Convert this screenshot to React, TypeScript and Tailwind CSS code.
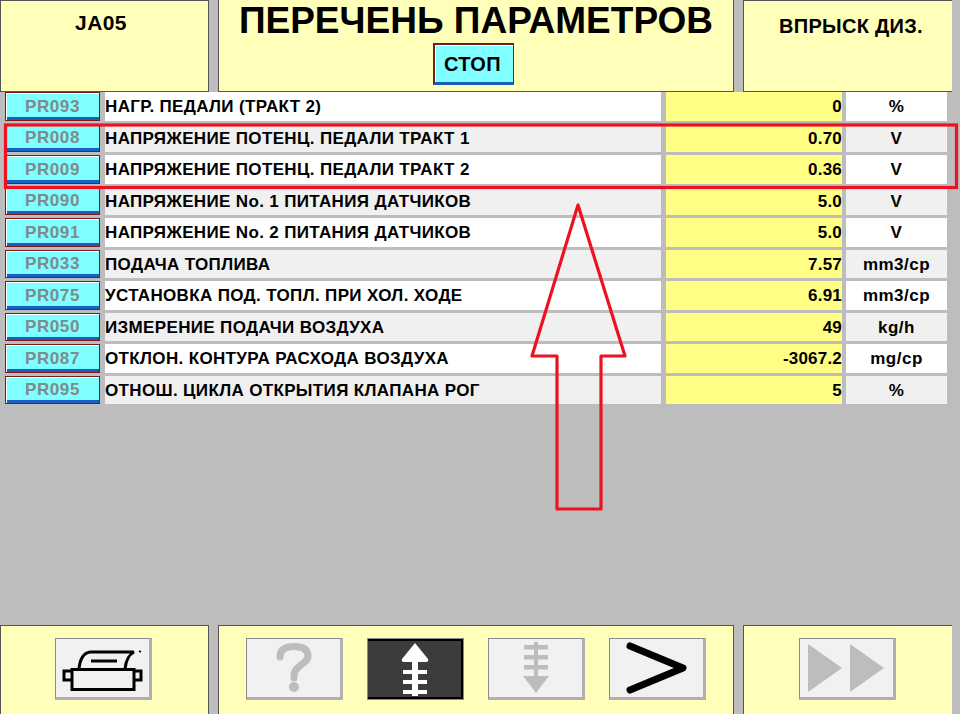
import type { ReactNode } from 'react'

const rows = [
  { code: 'PR093', label: 'НАГР. ПЕДАЛИ (ТРАКТ 2)', value: '0', unit: '%' },
  { code: 'PR008', label: 'НАПРЯЖЕНИЕ ПОТЕНЦ. ПЕДАЛИ ТРАКТ 1', value: '0.70', unit: 'V' },
  { code: 'PR009', label: 'НАПРЯЖЕНИЕ ПОТЕНЦ. ПЕДАЛИ ТРАКТ 2', value: '0.36', unit: 'V' },
  { code: 'PR090', label: 'НАПРЯЖЕНИЕ No. 1 ПИТАНИЯ ДАТЧИКОВ', value: '5.0', unit: 'V' },
  { code: 'PR091', label: 'НАПРЯЖЕНИЕ No. 2 ПИТАНИЯ ДАТЧИКОВ', value: '5.0', unit: 'V' },
  { code: 'PR033', label: 'ПОДАЧА ТОПЛИВА', value: '7.57', unit: 'mm3/cp' },
  { code: 'PR075', label: 'УСТАНОВКА ПОД. ТОПЛ. ПРИ ХОЛ. ХОДЕ', value: '6.91', unit: 'mm3/cp' },
  { code: 'PR050', label: 'ИЗМЕРЕНИЕ ПОДАЧИ ВОЗДУХА', value: '49', unit: 'kg/h' },
  { code: 'PR087', label: 'ОТКЛОН. КОНТУРА РАСХОДА ВОЗДУХА', value: '-3067.2', unit: 'mg/cp' },
  { code: 'PR095', label: 'ОТНОШ. ЦИКЛА ОТКРЫТИЯ КЛАПАНА РОГ', value: '5', unit: '%' },
]

function ToolButton({ children, dark }: { children: ReactNode; dark?: boolean }) {
  return (
    <button
      className={`flex h-[62px] w-[97px] items-center justify-center ${
        dark
          ? 'border-[3px] border-l border-black bg-[#3c3c3c] outline outline-[#8a8a8a] -outline-offset-1'
          : 'border border-r-[3px] border-b-[3px] border-t-[#8a8a8a] border-l-[#8a8a8a] border-r-[#b0b0b0] border-b-[#b0b0b0] bg-[#f1f1f1]'
      }`}
    >
      {children}
    </button>
  )
}

export default function App() {
  return (
    <div
      className="relative flex h-[714px] w-[960px] flex-col overflow-hidden bg-[#bdbdbd] text-black"
      style={{ fontFamily: '"Liberation Sans", Arial, sans-serif' }}
    >
      {/* Header */}
      <div className="flex h-[92px] gap-[9px] pr-[8px]">
        <div className="flex w-[209px] justify-center border border-[#555] bg-[#ffffb9] pt-[10px] pr-[7px] text-[21px] leading-[23px] font-bold tracking-[0.4px]">
          JA05
        </div>
        <div className="flex flex-1 flex-col items-center border-x border-b border-[#555] bg-[#ffffb9]">
          <h1 className="text-[37px] leading-[41px] font-bold whitespace-nowrap">ПЕРЕЧЕНЬ ПАРАМЕТРОВ</h1>
          <button className="mt-[2px] mr-[5px] h-[42px] w-[81px] border-2 border-r border-b-[3px] border-t-[#7a1a1a] border-l-[#7a1a1a] border-r-[#7a1a1a] border-b-[#1560c0] bg-[#7fffff] pr-[3px] text-[20px] font-bold tracking-[0.4px] shadow-[inset_0_1px_0_#ffffff,inset_1px_0_0_#ffffff]">
            СТОП
          </button>
        </div>
        <div className="flex w-[209px] justify-center border-y border-l border-[#555] bg-[#ffffb9] pt-[15px] pl-[6px] text-[20px] leading-[21px] font-bold tracking-[0.3px]">
          ВПРЫСК ДИЗ.
        </div>
      </div>

      {/* Parameter table */}
      <div className="flex flex-col gap-[3px] pr-[13px] pl-[5px]">
        {rows.map((r, i) => (
          <div key={r.code} className="flex h-[28.5px] gap-[5px]">
            <button className="w-[95px] border border-[#7a1a1a] bg-[#7fffff] text-[17px] font-bold tracking-[0.6px] text-[#7d8b8b] shadow-[inset_0_1px_0_#ffffff,inset_1px_0_0_#ffffff,inset_0_-3px_0_#1560c0]">
              {r.code}
            </button>
            <div className={`flex flex-1 items-center pt-[1px] text-[17px] font-bold tracking-[0.35px] whitespace-nowrap ${i % 2 ? 'bg-[#f0f0f0]' : 'bg-white'}`}>
              {r.label}
            </div>
            <div className="flex w-[176px] items-center justify-end bg-[#ffff85] pt-[1px] text-[17px] font-bold tracking-[0.2px]">{r.value}</div>
            <div className={`ml-[-1px] flex w-[101px] items-center justify-center pt-[1px] text-[17px] font-bold tracking-[0.5px] ${i % 2 ? 'bg-[#f0f0f0]' : 'bg-white'}`}>
              {r.unit}
            </div>
          </div>
        ))}
      </div>

      {/* Toolbar */}
      <div className="mt-auto flex h-[89px] gap-[9px] pr-[8px]">
        <div className="flex w-[209px] items-start justify-center border-x border-t border-[#555] bg-[#ffffb9] pt-[12px] pr-[3px]">
          <ToolButton>
            <svg width="84" height="48" viewBox="0 0 84 48" fill="none" stroke="black">
              <path d="M19 25 C20 14 24 9 30 8 H74 C70 10 66 16 65 25" strokeWidth="3" />
              <path d="M31 17 H57" strokeWidth="3" />
              <path d="M79 7 L81 8" strokeWidth="1.5" />
              <rect x="12" y="25.5" width="62" height="20" strokeWidth="3" />
              <path d="M12 27 H4 V36 H12 M74 27 H81 V36 H74" strokeWidth="3" />
            </svg>
          </ToolButton>
        </div>
        <div className="flex flex-1 items-start justify-center gap-[24px] border-x border-t border-[#555] bg-[#ffffb9] pt-[12px]">
          <ToolButton>
            <svg width="36" height="50" viewBox="0 0 36 50" fill="none">
              <path d="M4 14 C4 6 10 3.5 18 3.5 C26 3.5 32 6 32 13 C32 21 18 22 18 33 V35" stroke="#bdbdbd" strokeWidth="7" strokeLinecap="round" />
              <circle cx="18" cy="44" r="5" fill="#bdbdbd" />
            </svg>
          </ToolButton>
          <ToolButton dark>
            <svg width="28" height="53" viewBox="0 0 28 53" fill="white">
              <path d="M14 0 L27 16 Q28 19 25 19 H3 Q0 19 1 16 Z" />
              <rect x="11" y="17" width="6" height="36" />
              <rect x="2" y="27" width="24" height="4" />
              <rect x="2" y="37" width="24" height="4" />
              <rect x="2" y="47" width="24" height="4" />
            </svg>
          </ToolButton>
          <ToolButton>
            <svg width="28" height="52" viewBox="0 0 28 52" fill="#bdbdbd">
              <path d="M14 51 L27 34 H1 Z" />
              <rect x="12" y="0" width="4" height="36" />
              <rect x="2" y="3" width="24" height="4.5" />
              <rect x="2" y="13" width="24" height="4.5" />
              <rect x="2" y="23" width="24" height="4.5" />
            </svg>
          </ToolButton>
          <ToolButton>
            <svg width="64" height="54" viewBox="0 0 64 54" fill="none">
              <path d="M5 5 L58 27 L5 49" stroke="black" strokeWidth="7" strokeLinecap="round" strokeLinejoin="round" />
            </svg>
          </ToolButton>
        </div>
        <div className="flex w-[209px] items-start justify-center border-l border-t border-[#555] bg-[#ffffb9] pt-[12px] pr-[2px]">
          <ToolButton>
            <svg width="76" height="48" viewBox="0 0 76 48" fill="#bdbdbd">
              <path d="M0 0 L34 24 L0 48 Z" />
              <path d="M42 0 L76 24 L42 48 Z" />
            </svg>
          </ToolButton>
        </div>
      </div>

      {/* Red annotation drawn over the screenshot */}
      <svg className="pointer-events-none absolute top-0 left-0" width="960" height="714" fill="none" stroke="#ee1122" strokeWidth="3.2">
        <rect x="5.5" y="125" width="951" height="62.5" />
        <path d="M578 205 L532 356 H557 V509 H601 V356 H625 Z" strokeLinejoin="round" />
      </svg>
    </div>
  )
}
